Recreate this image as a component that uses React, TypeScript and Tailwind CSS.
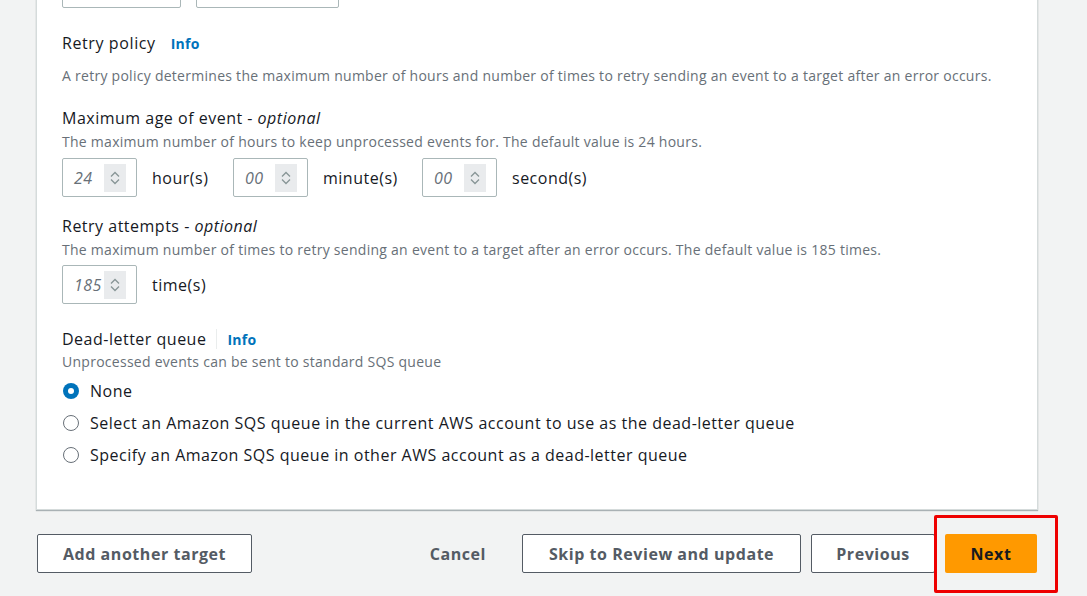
import React from 'react';

const Stepper = () => (
    <div className="absolute right-[10px] top-1/2 -translate-y-1/2 w-[22px] h-[28px] bg-[#e9ebed] flex flex-col items-center justify-center gap-[2px]">
        <svg width="10" height="6" viewBox="0 0 10 6" fill="none" stroke="#879596" strokeWidth={1.3}>
            <path d="M1 5.5 L5 1.5 L9 5.5" />
        </svg>
        <svg width="10" height="6" viewBox="0 0 10 6" fill="none" stroke="#879596" strokeWidth={1.3}>
            <path d="M1 0.5 L5 4.5 L9 0.5" />
        </svg>
    </div>
);

const NumberBox = ({ value }: { value: string }) => (
    <div className="relative w-[75px] h-[39px] border border-[#aab7b8] rounded-[2px] bg-white flex items-center pl-[11px]">
        <span className="italic text-[16px] tracking-[0.4px] text-[#687078]">{value}</span>
        <Stepper />
    </div>
);

const Radio = ({ checked, label }: { checked?: boolean; label: string }) => (
    <label className="flex items-center h-[32px] gap-[11px] pl-[1px]">
        {checked ? (
            <span className="w-[16px] h-[16px] rounded-full bg-[#0073bb] flex items-center justify-center">
                <span className="w-[6px] h-[6px] rounded-full bg-white" />
            </span>
        ) : (
            <span className="w-[16px] h-[16px] rounded-full border-[1.5px] border-[#687078] bg-white" />
        )}
        <span className="text-[16px] tracking-[0.5px] text-[#16191f]">{label}</span>
    </label>
);

const App: React.FC = () => {
    return (
        <div className="min-h-[596px] h-[596px] overflow-hidden bg-[#f2f3f3] font-['Open_Sans',sans-serif]">
            {/* Target card (scrolled, top cut off) */}
            <div className="ml-[36px] w-[1002px] -mt-[31px] bg-white border-x border-b border-[#d5dbdb] shadow-[0_1px_1px_0_rgba(0,28,36,0.3)] pl-[25px] pb-[38px]">
                <div className="flex gap-[15px]">
                    <div className="w-[119px] h-[39px] border border-[#aab7b8] rounded-[2px]" />
                    <div className="w-[143px] h-[39px] border border-[#aab7b8] rounded-[2px]" />
                </div>

                {/* Retry policy */}
                <div className="mt-[24px] flex items-center h-[22px]">
                    <span className="text-[16px] tracking-[0.6px] text-[#16191f]">Retry policy</span>
                    <span className="ml-[15px] text-[14px] font-bold tracking-[0.3px] text-[#0073bb]">Info</span>
                </div>
                <p className="mt-[12px] text-[14px] leading-[20px] tracking-[0.27px] text-[#687078]">
                    A retry policy determines the maximum number of hours and number of times to retry sending an event to a target after an error occurs.
                </p>

                <div className="mt-[21px] text-[16px] leading-[22px] tracking-[0.5px] text-[#16191f]">
                    Maximum age of event - <span className="italic">optional</span>
                </div>
                <p className="mt-[3px] text-[14px] leading-[20px] tracking-[0.27px] text-[#687078]">
                    The maximum number of hours to keep unprocessed events for. The default value is 24 hours.
                </p>
                <div className="mt-[6px] flex items-center">
                    <NumberBox value="24" />
                    <span className="ml-[15px] w-[81px] text-[16px] tracking-[0.5px] text-[#16191f]">hour(s)</span>
                    <NumberBox value="00" />
                    <span className="ml-[15px] w-[99px] text-[16px] tracking-[0.5px] text-[#16191f]">minute(s)</span>
                    <NumberBox value="00" />
                    <span className="ml-[15px] text-[16px] tracking-[0.5px] text-[#16191f]">second(s)</span>
                </div>

                <div className="mt-[18px] text-[16px] leading-[22px] tracking-[0.5px] text-[#16191f]">
                    Retry attempts - <span className="italic">optional</span>
                </div>
                <p className="mt-[3px] text-[14px] leading-[20px] tracking-[0.27px] text-[#687078]">
                    The maximum number of times to retry sending an event to a target after an error occurs. The default value is 185 times.
                </p>
                <div className="mt-[5px] flex items-center">
                    <NumberBox value="185" />
                    <span className="ml-[15px] text-[16px] tracking-[0.5px] text-[#16191f]">time(s)</span>
                </div>

                {/* Dead-letter queue */}
                <div className="mt-[24px] flex items-center h-[22px]">
                    <span className="text-[16px] tracking-[0.5px] text-[#16191f]">Dead-letter queue</span>
                    <span className="ml-[10px] w-px h-[20px] bg-[#eaeded]" />
                    <span className="ml-[10px] text-[14px] font-bold tracking-[0.3px] text-[#0073bb]">Info</span>
                </div>
                <p className="mt-[2px] text-[14px] leading-[20px] tracking-[0.27px] text-[#687078]">
                    Unprocessed events can be sent to standard SQS queue
                </p>
                <div className="mt-[3px] flex flex-col">
                    <Radio checked label="None" />
                    <Radio label="Select an Amazon SQS queue in the current AWS account to use as the dead-letter queue" />
                    <Radio label="Specify an Amazon SQS queue in other AWS account as a dead-letter queue" />
                </div>
            </div>

            {/* Footer actions */}
            <div className="ml-[37px] w-[1000px] mt-[24px] flex items-center text-[16px] font-bold tracking-[0.55px]">
                <button className="h-[39px] w-[215px] border border-[#545b64] rounded-[2px] bg-white text-[#545b64]">
                    Add another target
                </button>
                <div className="ml-auto flex items-center">
                    <button className="h-[39px] px-[20px] text-[#545b64]">Cancel</button>
                    <button className="ml-[16px] h-[39px] w-[279px] border border-[#545b64] rounded-[2px] bg-white text-[#545b64]">
                        Skip to Review and update
                    </button>
                    <button className="ml-[10px] h-[39px] w-[124px] border border-[#545b64] rounded-[2px] bg-white text-[#545b64]">
                        Previous
                    </button>
                    <div className="relative ml-[10px]">
                        <button className="h-[39px] w-[92px] rounded-[2px] bg-[#ff9900] text-[#16191f]">
                            Next
                        </button>
                        <span className="absolute -left-[11px] -top-[19px] w-[124px] h-[78px] border-[3px] border-[#ee0000] rounded-[2px] pointer-events-none" />
                    </div>
                </div>
            </div>
        </div>
    );
};

export default App;
